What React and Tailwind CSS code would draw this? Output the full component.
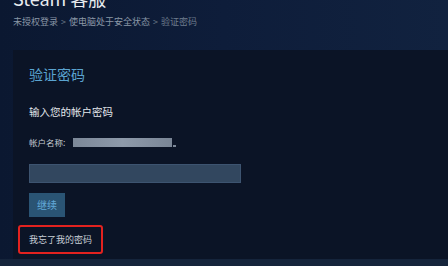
export default function App() {
  const font = { fontFamily: '"Noto Sans CJK SC", "Noto Sans", Arial, sans-serif' };
  return (
    <div
      className="w-[448px] h-[266px] overflow-hidden bg-gradient-to-r from-[#0b1831] via-[#0e1d3a] to-[#11223f] flex flex-col"
      style={font}
    >
      <div className="pl-[13px] flex flex-col">
        <div className="h-[16px] flex flex-col">
          <div className="mt-[-11px] h-[18px] text-[18px] leading-[18px] text-[#e8ecf0] whitespace-nowrap">
            Steam 客服
          </div>
        </div>
        <div className="flex items-center gap-[3px] h-[12px] text-[9px] leading-[12px] text-[#8a97a6] whitespace-nowrap">
          <span>未授权登录</span>
          <span className="text-[#6b7888]">&gt;</span>
          <span>使电脑处于安全状态</span>
          <span className="text-[#6b7888]">&gt;</span>
          <span className="text-[#6f7d8e]">验证密码</span>
        </div>
      </div>

      <div className="ml-[13px] mt-[22px] h-[209px] w-[450px] shrink-0 bg-[#0b1426] pl-[16px] pt-[16px] flex flex-col items-start">
        <div className="text-[14px] leading-[16px] text-[#5aa3d0]">验证密码</div>
        <div className="mt-[23px] text-[10.5px] leading-[14px] text-[#e4e8ec]">输入您的帐户密码</div>
        <div className="mt-[18px] flex items-center h-[10px]">
          <span className="text-[8.5px] leading-[10px] text-[#c6ccd3]">帐户名称:</span>
          <div className="ml-[8px] h-[9px] w-[99px] bg-gradient-to-r from-[#7c8898] via-[#8e9aaa] to-[#7a8696]" />
          <div className="ml-[1px] h-[2px] w-[3px] self-end bg-[#7a8696]" />
        </div>
        <div className="mt-[17px] h-[19px] w-[212px] bg-[#32475f] border border-[#3d5470]" />
        <button className="mt-[10px] h-[24px] w-[36px] bg-[#2a5474] text-[10px] leading-[24px] text-[#62a9d9]">
          继续
        </button>
        <div className="mt-[8px] ml-[-11px] h-[29px] w-[85px] border-2 border-[#e3221f] rounded-[3px] pl-[9px] flex items-center">
          <span className="text-[9px] leading-[12px] text-[#c9d0d8] whitespace-nowrap">我忘了我的密码</span>
        </div>
      </div>
      <div className="flex-1 bg-[#15243b]" />
    </div>
  );
}
